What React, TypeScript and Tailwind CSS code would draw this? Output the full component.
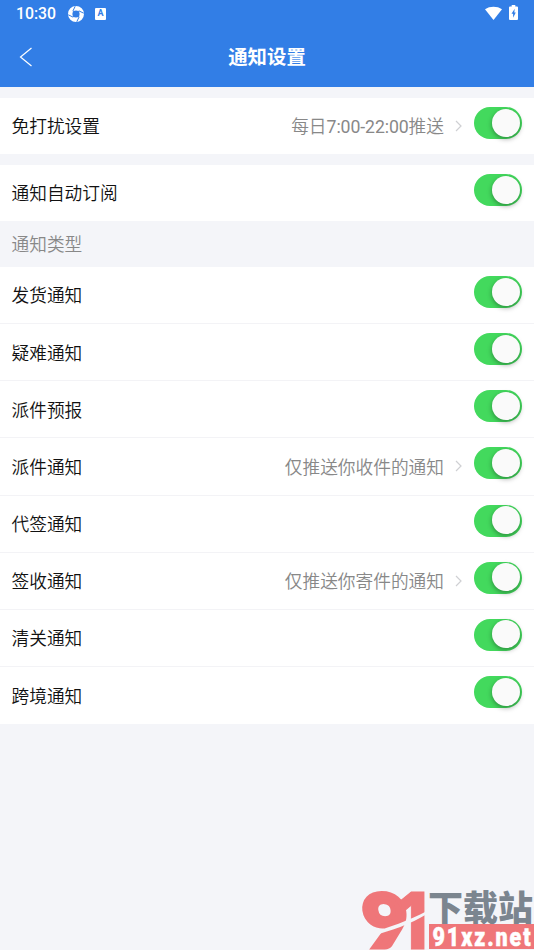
import { useState } from "react";
import type { ReactNode } from "react";
import clsx from "clsx";

type SettingRowProps = {
  readonly label: string;
  readonly detail?: ReactNode;
  readonly className?: string;
};

const notificationTypes: SettingRowProps[] = [
  { label: "发货通知" },
  { label: "疑难通知" },
  { label: "派件预报" },
  { label: "派件通知", detail: "仅推送你收件的通知" },
  { label: "代签通知" },
  { label: "签收通知", detail: "仅推送你寄件的通知" },
  { label: "清关通知" },
  { label: "跨境通知" },
];

function StatusBar() {
  return (
    <div className="flex h-[27px] items-center pr-4 pl-4 text-white">
      <span className="w-[52px] pt-px text-[15.8px] leading-7 font-medium">10:30</span>
      <svg className="size-4" viewBox="0 0 16 16" fill="none">
        <circle cx="8" cy="8" r="5.8" stroke="currentColor" strokeWidth="4.400" />
        <path
          d="M4.800 5.200 7.200.300M10.800 4.800 15.700 7.200M11.200 10.800 8.800 15.700M5.200 11.200.300 8.800"
          stroke="#327ee6"
          strokeWidth="1"
        />
        <path d="M5 5.200 10.800 5 11 10.800 5.200 11Z" fill="#327ee6" />
      </svg>
      <span className="ml-[11px] flex h-3 w-[11px] items-center justify-center rounded-[1px] bg-white text-[9px] leading-none font-bold text-[#327ee6]">
        A
      </span>
      <svg className="mb-px ml-auto h-[15px] w-[17px]" viewBox="0 0 17 15">
        <path d="M0 3.200C4.800-.1 12.200-.1 17 3.200L8.500 14Z" fill="currentColor" />
      </svg>
      <svg className="mb-0.5 ml-[7px] h-[15px] w-[9px]" viewBox="0 0 9 15">
        <path
          d="M2.700 0h3.600v1.500H8a1 1 0 0 1 1 1V14a1 1 0 0 1-1 1H1a1 1 0 0 1-1-1V2.500a1 1 0 0 1 1-1h1.700Z"
          fill="currentColor"
        />
        <path d="M5.700 3.800 2.500 8.800h1.600v3.900l2.700-5.200H5.300Z" fill="#327ee6" />
      </svg>
    </div>
  );
}

function Toggle({ label }: { readonly label: string }) {
  const [checked, setChecked] = useState(true);

  return (
    <button
      type="button"
      role="switch"
      aria-checked={checked}
      aria-label={label}
      onClick={() => setChecked(!checked)}
      className={clsx(
        "mb-1.5 flex h-8 w-12 items-start rounded-full px-0.5 pt-[1.5px]",
        checked ? "justify-end bg-[#43d95d]" : "justify-start bg-gray-300",
      )}
    >
      <span className="size-7 rounded-full bg-[#fafafa] shadow-[0_2px_5px_rgba(0,0,0,0.35)]" />
    </button>
  );
}

function SettingRow({ label, detail, className }: SettingRowProps) {
  return (
    <div className={clsx("flex items-center bg-white pr-3 pl-[11.5px]", className)}>
      <span className="pt-[3.2px] text-[17.7px] font-[350] text-[#111]">{label}</span>
      <div className="ml-auto flex items-center">
        {detail && (
          <>
            <span className="pt-[3px] text-[17.7px] font-[350] text-[#888]">{detail}</span>
            <svg className="mr-3 ml-[11px] h-3 w-[7px]" viewBox="0 0 7 12" fill="none">
              <path d="m1 1 5 5-5 5" stroke="#cfd0d3" strokeWidth="1.200" />
            </svg>
          </>
        )}
        <Toggle label={label} />
      </div>
    </div>
  );
}

function Watermark() {
  return (
    <svg
      className="pointer-events-none absolute right-0 bottom-0 h-[62px] w-[172px]"
      viewBox="0 0 172 62"
    >
      <g fill="#ef7679" stroke="#ef7679">
        <text
          x="-3"
          y="59"
          transform="skewX(8)"
          strokeWidth="5"
          fontFamily="Lato, sans-serif"
          fontSize="73"
          fontWeight="900"
          textLength="45"
          lengthAdjust="spacingAndGlyphs"
        >
          9
        </text>
        <text
          x="36"
          y="61"
          strokeWidth="1"
          fontFamily="Inter, sans-serif"
          fontSize="78"
          fontWeight="900"
          textLength="29"
          lengthAdjust="spacingAndGlyphs"
        >
          1
        </text>
      </g>
      <path d="M8 46C26 39 47 33 65 23V26C49 36 28 43 10 48Z" fill="#f4f5f9" />
      <text
        x="66"
        y="33"
        fill="#7b858f"
        fontFamily="'Noto Sans CJK SC', sans-serif"
        fontSize="35"
        fontWeight="900"
      >
        下载站
      </text>
      <rect x="67" y="36" width="105" height="25" fill="#ef7679" />
      <text
        x="82"
        y="58"
        fill="#fff"
        stroke="#fff"
        strokeWidth=".5"
        transform="scale(.86 1)"
        fontFamily="Roboto, sans-serif"
        fontSize="25"
        fontWeight="900"
        textLength="114"
        lengthAdjust="spacing"
      >
        91xz.net
      </text>
    </svg>
  );
}

export default function App() {
  return (
    <div className="relative h-[950px] w-full overflow-hidden bg-[#f4f5f9] font-[Roboto,'Noto_Sans_CJK_SC',sans-serif]">
      <header className="h-[87px] bg-[#327ee6]">
        <StatusBar />
        <div className="grid h-[60px] grid-cols-[1fr_auto_1fr] items-center text-white">
          <button type="button" aria-label="返回" className="ml-[19px] w-fit">
            <svg className="h-5 w-[14px]" viewBox="0 0 14 20" fill="none">
              <path d="M12.500 1 1.500 10l11 9" stroke="currentColor" strokeWidth="1.200" />
            </svg>
          </button>
          <h1 className="pt-px text-[19.400px] font-bold">通知设置</h1>
        </div>
      </header>

      <main>
        <SettingRow
          className="mt-[11px] h-14"
          label="免打扰设置"
          detail={
            <>
              每日<span className="font-normal tracking-[-0.1px]">7:00-22:00</span>推送
            </>
          }
        />
        <SettingRow className="mt-[11px] h-14" label="通知自动订阅" />
        <h2 className="flex h-[46px] items-center pt-0.5 pl-[11.500px] text-[17.700px] font-[350] text-[#888]">
          通知类型
        </h2>
        <div className="divide-y divide-[#f3f3f6]">
          {notificationTypes.map((item) => (
            <SettingRow key={item.label} className="h-[57.125px]" {...item} />
          ))}
        </div>
      </main>

      <Watermark />
    </div>
  );
}
